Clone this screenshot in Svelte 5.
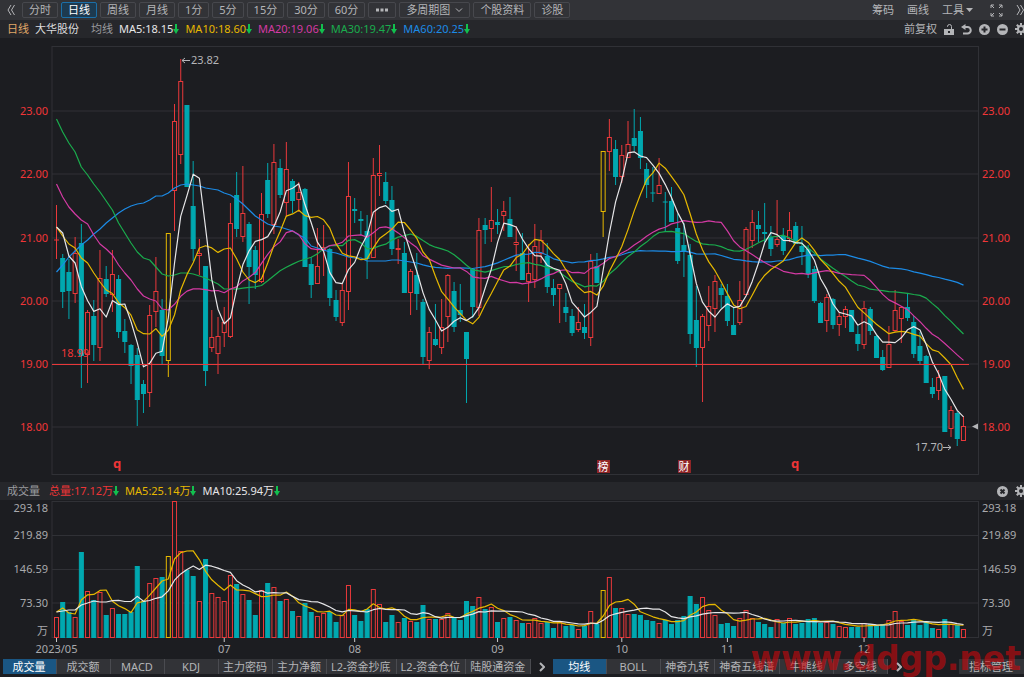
<script lang="ts">
  type Candle = { kind: string; high: number; top: number; bottom: number; low: number };

  const periods = ['分时', '日线', '周线', '月线', '1分', '5分', '15分', '30分', '60分'];

  const averages = [
    { label: 'MA5:18.15', tone: 'white' },
    { label: 'MA10:18.60', tone: 'yellow' },
    { label: 'MA20:19.06', tone: 'pink' },
    { label: 'MA30:19.47', tone: 'green' },
    { label: 'MA60:20.25', tone: 'blue' }
  ];

  const volumeStats = [
    { label: '总量:17.12万', tone: 'red' },
    { label: 'MA5:25.14万', tone: 'yellow' },
    { label: 'MA10:25.94万', tone: 'white' }
  ];

  const volumeTabs = ['成交量', '成交额', 'MACD', 'KDJ', '主力密码', '主力净额', 'L2-资金抄底', 'L2-资金仓位', '陆股通资金'];
  const lineTabs = ['均线', 'BOLL', '神奇九转', '神奇五线谱', '牛熊线', '多空线'];

  // kind (r up, t down, y limit up), then high, body top, body bottom, low in chart units
  const raw = `r 205 240 240 259,t 254 258 292 308,t 259 272 291 319,r 237 253 294 303,t 224 243 356 388,r 310 312 355 383,
t 300 316 345 361,r 250 278 348 361,t 266 279 294 297,r 250 274 295 312,t 275 279 332 338,t 319 331 342 353,
t 344 345 366 384,t 348 355 400 426,t 380 384 394 413,r 305 315 393 407,r 257 291 312 327,t 299 310 356 364,
y 233 233 361 377,r 104 121 191 231,r 59 81 155 164,t 105 105 187 187,t 161 206 249 261,r 239 253 256 275,
t 266 266 371 386,r 310 337 348 352,r 317 336 354 374,r 307 322 333 347,r 203 223 337 338,t 172 195 229 237,
r 166 213 237 242,t 222 224 267 304,t 246 250 275 289,r 193 214 282 283,t 163 180 214 218,r 144 162 225 234,
t 159 168 195 198,r 142 169 203 217,t 179 181 201 213,r 182 192 200 212,t 188 189 267 267,t 257 264 285 298,
r 228 266 284 284,r 225 247 250 276,t 248 249 298 306,t 290 300 317 321,r 284 290 323 326,r 162 196 292 310,
t 198 209 211 223,t 211 219 220 235,t 215 231 259 279,r 158 175 258 258,r 145 173 176 196,t 172 182 201 204,
t 186 200 249 255,r 239 248 250 264,t 242 253 293 293,r 269 271 293 315,t 253 275 294 310,t 299 302 357 365,
r 327 332 361 369,t 304 339 345 346,r 299 327 348 354,r 274 275 317 342,t 282 291 327 332,t 284 310 315 322,
t 332 332 359 403,t 269 269 307 318,r 218 230 308 316,t 218 225 230 244,r 187 220 229 242,t 209 222 225 234,
r 201 211 216 231,t 197 219 237 237,r 226 242 245 271,t 233 253 280 280,r 244 273 282 302,r 224 246 280 288,
r 230 240 254 263,t 243 256 287 293,t 279 288 295 306,r 284 284 289 323,t 293 307 313 322,t 309 316 333 336,
r 307 322 330 332,t 304 327 333 339,r 254 261 338 346,t 253 266 283 283,y 151 151 212 237,r 119 137 152 171,
t 140 149 177 185,r 145 155 177 183,r 121 144 158 158,t 109 138 146 151,t 117 131 158 169,t 163 169 185 198,
t 167 193 193 202,r 158 185 194 194,t 192 202 202 232,t 187 201 222 222,t 214 228 261 264,t 223 245 252 277,
t 244 255 334 344,t 286 320 348 367,r 314 316 348 402,r 286 306 326 341,r 275 281 309 332,t 284 288 295 308,
t 284 296 321 326,t 308 325 335 335,r 281 300 323 325,r 227 229 295 295,r 210 222 241 248,t 211 225 229 242,
t 203 232 234 242,t 226 237 249 256,r 200 239 245 247,t 228 236 251 255,r 212 230 239 242,t 222 226 244 244,
t 226 246 252 265,t 245 249 274 278,t 266 269 301 303,t 302 303 323 323,r 294 297 321 332,t 298 299 325 329,
r 313 316 325 336,r 306 309 317 328,t 310 310 332 332,t 326 334 344 351,r 301 308 345 349,t 307 309 331 335,
t 335 336 358 358,t 350 357 370 371,r 326 344 368 368,r 290 310 331 332,r 306 307 319 343,t 294 307 318 321,
t 316 322 354 358,t 332 346 361 364,t 355 356 383 383,t 378 387 394 398,r 370 377 391 400,t 376 376 432 432,
r 406 410 429 437,t 411 413 439 446,r 416 426 441 441`;

  const candles: Candle[] = raw.split(',').map((row) => {
    const [kind, ...n] = row.trim().split(' ');
    const [high, top, bottom, low] = n.map(Number);
    return { kind, high, top, bottom, low };
  });

  const volumes = [
    20, 35, 25, 20, 85, 46, 37, 45, 22, 29, 23, 23, 25, 71, 36, 54, 59, 60, 81, 136, 86, 67, 61, 36, 78, 44, 40, 36, 62, 53,
    43, 37, 22, 47, 54, 50, 36, 38, 26, 21, 34, 25, 21, 24, 25, 15, 22, 52, 22, 16, 28, 48, 33, 15, 22, 15, 19, 16, 15, 32,
    18, 18, 18, 24, 20, 17, 36, 31, 40, 28, 30, 15, 19, 20, 17, 14, 14, 19, 14, 15, 9, 15, 11, 12, 8, 11, 26, 13, 47, 60,
    29, 29, 23, 23, 22, 17, 16, 14, 17, 13, 17, 21, 41, 33, 40, 27, 22, 13, 14, 11, 19, 27, 19, 15, 13, 10, 18, 14, 19, 13,
    14, 18, 19, 14, 15, 13, 11, 10, 10, 10, 14, 13, 11, 13, 17, 26, 16, 12, 17, 12, 16, 9, 8, 18, 13, 12, 8
  ];

  const STEP = 6.212;
  const BASE = 637;
  const cx = (i: number) => 56.5 + i * STEP;

  // seed holds the values that depend on days before the visible range
  function movingAverage(values: number[], days: number, seed: number[]) {
    return values.map((_, i) =>
      i < days - 1 ? seed[i] : values.slice(i - days + 1, i + 1).reduce((a, b) => a + b, 0) / days
    );
  }

  const toPoints = (ys: number[]) => ys.map((y, i) => `${cx(i).toFixed(1)},${y.toFixed(1)}`).join(' ');

  const closes = candles.map((c) => (c.kind === 't' ? c.bottom : c.top));

  const priceLines = [
    {
      tone: 'blue',
      points: toPoints(movingAverage(closes, 60, [
        272, 265, 257, 251, 245, 240, 234, 229, 223, 218, 213, 209, 206, 204, 203, 200, 196, 196, 193, 188,
        185, 184, 185, 186, 188, 189, 190, 193, 195, 199, 204, 210, 216, 220, 224, 226, 227, 229, 231, 235,
        238, 246, 248, 250, 252, 253, 255, 257, 258, 258, 261, 261, 261, 261, 260, 260, 261, 262, 263
      ]))
    },
    {
      tone: 'green',
      points: toPoints(movingAverage(closes, 30, [
        119, 132, 143, 152, 167, 175, 184, 192, 201, 210, 223, 233, 243, 252, 258, 260, 267, 274, 276, 275,
        273, 273, 274, 276, 278, 281, 284, 289, 289
      ]))
    },
    {
      tone: 'pink',
      points: toPoints(movingAverage(closes, 20, [
        184, 197, 207, 214, 220, 224, 235, 244, 249, 255, 265, 273, 280, 289, 296, 299, 301, 309, 310
      ]))
    },
    { tone: 'yellow', points: toPoints(movingAverage(closes, 10, [227, 236, 244, 248, 258, 263, 273, 282, 290])) },
    { tone: 'white', points: toPoints(movingAverage(closes, 5, [227, 233, 256, 263])) }
  ];

  const fromBase = (hs: number[]) => toPoints(hs.map((h) => BASE - h));
  const volumeLines = [
    { tone: 'yellow', points: fromBase(movingAverage(volumes, 5, [25, 29, 24, 23])) },
    { tone: 'white', points: fromBase(movingAverage(volumes, 10, [25, 26, 27, 27, 32, 34, 36, 35, 35])) }
  ];

  const priceTicks = [
    { y: 111, label: '23.00' },
    { y: 174, label: '22.00' },
    { y: 238, label: '21.00' },
    { y: 301, label: '20.00' },
    { y: 364, label: '19.00' },
    { y: 427, label: '18.00' }
  ];

  const volumeTicks = [
    { y: 508, label: '293.18' },
    { y: 535, label: '219.89' },
    { y: 569, label: '146.59' },
    { y: 603, label: '73.30' },
    { y: 631, label: '万' }
  ];

  const months = [
    { i: 0, label: '2023/05' },
    { i: 27, label: '07' },
    { i: 48, label: '08' },
    { i: 71, label: '09' },
    { i: 91, label: '10' },
    { i: 108, label: '11' },
    { i: 130, label: '12' }
  ];

  let period = $state('日线');
  let volumeTab = $state('成交量');
  let lineTab = $state('均线');
</script>

{#snippet downArrow()}
  <svg class="down" width="6" height="10" viewBox="0 0 6 10" aria-hidden="true"><path d="M2 0h2v5h2L3 10 0 5h2z" /></svg>
{/snippet}

{#snippet gear()}
  <svg width="9" height="12" viewBox="0 0 9 12" aria-hidden="true">
    <circle class="bold" cx="6" cy="6" r="3" />
    <path class="bold" d="M6 0v3M6 9v3M0 6h3M9 6h3M1.8 1.8l2 2M1.8 10.2l2-2M10.2 1.8l-2 2M10.2 10.2l-2-2" />
  </svg>
{/snippet}

<div class="app">
  <header class="toolbar">
    <button class="icon" aria-label="收起">
      <svg width="8" height="12" viewBox="0 0 8 12"><path d="M4 1 1 6l3 5M7.5 1l-3 5 3 5" /></svg>
    </button>
    <nav class="toolbar__periods">
      {#each periods as p}
        <button class="chip" class:chip--on={period === p} onclick={() => (period = p)}>{p}</button>
      {/each}
      <button class="chip" aria-label="更多周期">
        <svg width="14" height="4" viewBox="0 0 14 4"><path class="solid" d="M1 .5h3v3H1zM5.5 .5h3v3h-3zM10 .5h3v3h-3z" /></svg>
      </button>
      <button class="chip">
        多周期图
        <svg width="8" height="5" viewBox="0 0 8 5"><path d="m1 .5 3 3 3-3" /></svg>
      </button>
      <button class="chip">个股资料</button>
      <button class="chip">诊股</button>
    </nav>
    <div class="toolbar__tools">
      <button class="plain">筹码</button>
      <button class="plain">画线</button>
      <button class="plain">工具<svg width="7" height="4" viewBox="0 0 7 4"><path class="solid" d="M0 0h7L3.5 4z" /></svg></button>
      <button class="icon icon--full" aria-label="全屏">
        <svg width="13" height="13" viewBox="0 0 13 13"><path d="M1 4V1h3M1 1l3 3M9 1h3v3M12 1 9 4M1 9v3h3M1 12l3-3M12 9v3H9M12 12 9 9" /></svg>
      </button>
      <button class="icon" aria-label="展开">
        <svg width="8" height="12" viewBox="0 0 8 12"><path d="m1 1 3 5-3 5M4.500 1l3 5-3 5" /></svg>
      </button>
    </div>
  </header>

  <section class="info">
    <span class="orange">日线</span>
    <span class="info__name">大华股份</span>
    <span class="info__key">均线</span>
    {#each averages as a}
      <span class="stat {a.tone}">{a.label}{@render downArrow()}</span>
    {/each}
    <div class="info__tools">
      <button class="plain">前复权</button>
      <button class="icon" aria-label="锁定">
        <svg width="10" height="11" viewBox="0 0 10 11"><path d="M3.5 3V2.500a2 2 0 0 1 4 0V5" /><path class="solid" fill-rule="evenodd" d="M0 5h10v6H0zM4 7v2h2V7z" /></svg>
      </button>
      <button class="icon" aria-label="撤销">
        <svg width="11" height="11" viewBox="0 0 11 11"><path class="bold" d="M3 3h3.5a3 3 0 0 1 0 6.500H2" /><path class="solid" d="M4.500 0v6L0 3z" /></svg>
      </button>
      <button class="icon" aria-label="放大">
        <svg width="11" height="11" viewBox="0 0 11 11"><circle class="solid" cx="5.5" cy="5.5" r="5.5" /><path class="cut" d="M5.5 2.500v6M2.500 5.500h6" /></svg>
      </button>
      <button class="icon" aria-label="缩小">
        <svg width="11" height="11" viewBox="0 0 11 11"><circle class="solid" cx="5.5" cy="5.5" r="5.5" /><path class="cut" d="M2.500 5.500h6" /></svg>
      </button>
      <button class="icon" aria-label="设置">{@render gear()}</button>
    </div>
  </section>

  <svg class="chart" viewBox="0 38 1024 444" role="img" aria-label="大华股份 日线">
    <g class="grid">
      <rect x="52" y="46.5" width="926.5" height="428" />
      {#each priceTicks as t}
        <path d="M52 {t.y}H978" />
      {/each}
    </g>
    {#each priceTicks as t}
      <text class="axis axis--red" x="48" y={t.y + 4} text-anchor="end">{t.label}</text>
      <text class="axis axis--red" x="982" y={t.y + 4}>{t.label}</text>
    {/each}

    {#each candles as c, i}
      <g class="candle candle--{c.kind}">
        <path d="M{cx(i)} {c.high}V{c.top}M{cx(i)} {c.bottom}V{c.low}" />
        {#if c.bottom - c.top < 1}
          <path d="M{cx(i) - 2.5} {c.top}h5" />
        {:else}
          <rect x={cx(i) - 2} y={c.top + 0.5} width="4" height={Math.max(c.bottom - c.top - 1, 1)} />
        {/if}
      </g>
    {/each}

    {#each priceLines as l}
      <polyline class="line {l.tone}" points={l.points} />
    {/each}
    <path class="level" d="M52 364.5H969" />
    <text class="axis axis--red" x="61" y="357">18.99</text>

    <g class="note">
      <path d="M190 60.5h-8m3-2.500-3 2.500 3 2.500" />
      <text x="191" y="64">23.82</text>
      <path d="M943 447.5h8m-3-2.500 3 2.500-3 2.500" />
      <text x="915" y="451">17.70</text>
      <path class="note__mark" d="M972 426.5l6-3v6z" />
    </g>

    <text class="event" x="117" y="468">q</text>
    <text class="event" x="795" y="468">q</text>
    <g class="badge">
      <rect x="597" y="460" width="13" height="13" />
      <text x="603" y="471">榜</text>
      <rect x="678" y="460" width="13" height="13" />
      <text x="684" y="471">财</text>
    </g>
  </svg>

  <section class="info info--volume">
    <span class="info__key">成交量</span>
    {#each volumeStats as s}
      <span class="stat {s.tone}">{s.label}{@render downArrow()}</span>
    {/each}
    <div class="info__tools">
      <button class="icon" aria-label="关闭">
        <svg width="11" height="11" viewBox="0 0 11 11"><circle class="solid" cx="5.5" cy="5.5" r="5.5" /><path class="cut" d="m3.5 3.5 4 4M7.5 3.5l-4 4" /></svg>
      </button>
      <button class="icon" aria-label="设置">{@render gear()}</button>
    </div>
  </section>

  <svg class="chart" viewBox="0 500 1024 156" role="img" aria-label="成交量">
    <g class="grid">
      <rect x="52" y="501.5" width="926.5" height="136" />
      <path d="M52 535.5H978M52 569.5H978M52 603H978" />
    </g>
    {#each volumeTicks as t}
      <text class="axis" x="48" y={t.y + 4} text-anchor="end">{t.label}</text>
      <text class="axis" x="982" y={t.y + 4}>{t.label}</text>
    {/each}
    {#each volumes as v, i}
      <g class="candle candle--{candles[i].kind}">
        <rect x={cx(i) - 2} y={BASE - v + 0.5} width="4" height={v} />
      </g>
    {/each}
    {#each volumeLines as l}
      <polyline class="line {l.tone}" points={l.points} />
    {/each}
    {#each months as m}
      <path class="tick" d="M{cx(m.i)} 638v4" />
      <text class="axis" x={cx(m.i)} y="653" text-anchor="middle">{m.label}</text>
    {/each}
  </svg>

  <footer class="tabs">
    <div class="tabs__group">
      {#each volumeTabs as t}
        <button class="tab" class:tab--on={volumeTab === t} onclick={() => (volumeTab = t)}>{t}</button>
      {/each}
    </div>
    <button class="icon icon--next" aria-label="更多指标">
      <svg width="6" height="10" viewBox="0 0 6 10"><path class="bold" d="m1 1 4 4-4 4" /></svg>
    </button>
    <div class="tabs__group">
      {#each lineTabs as t}
        <button class="tab" class:tab--on={lineTab === t} onclick={() => (lineTab = t)}>{t}</button>
      {/each}
    </div>
    <button class="icon icon--next" aria-label="更多均线">
      <svg width="6" height="10" viewBox="0 0 6 10"><path class="bold" d="m1 1 4 4-4 4" /></svg>
    </button>
    <button class="tab tab--manage">指标管理</button>
  </footer>

  <div class="watermark">www.ddgp.net</div>
</div>

<style>
  :global(body) { background: #17181b; }
  .app { position: relative; overflow: hidden; background: #1c1d21; color: #b4b5b8; font: 11px/16px "Noto Sans", "Noto Sans CJK SC", sans-serif; white-space: nowrap; }
  button { display: flex; align-items: center; justify-content: center; margin: 0; padding: 0; border: 0; background: none; color: inherit; font: inherit; cursor: pointer; }
  button svg { flex: none; fill: none; stroke: currentColor; stroke-width: 1; }
  .solid { fill: currentColor; stroke: none; }
  .bold { stroke-width: 2; }
  .cut { stroke: #26272b; stroke-width: 2; }

  .toolbar { display: flex; align-items: center; height: 20px; padding-left: 7px; background: #323337; }
  .toolbar__periods { display: flex; gap: 3px; margin-left: 7px; }
  .toolbar__tools { display: flex; align-items: center; gap: 13px; margin-left: auto; }
  .chip { box-sizing: border-box; height: 16px; padding: 0 6px; gap: 5px; border: 1px solid #47484d; border-radius: 2px; line-height: 14px; }
  .chip--on { background: #1d3a50; border-color: #1b6fa8; color: #fff; }
  .plain { gap: 2px; }
  .icon--full { margin-left: 4px; }

  .info { display: flex; align-items: center; gap: 6px; height: 18px; padding-left: 7px; background: #26272b; }
  .info__name { color: #dcdcde; }
  .info__key { color: #9a9b9f; }
  .info__name + .info__key { margin-left: 6px; }
  .info--volume .info__key { margin-right: 3px; }
  .info__tools { display: flex; align-items: center; gap: 7px; margin-left: auto; }
  .stat { display: flex; align-items: center; color: var(--tone); }
  .down { fill: #12c04e; }

  .white { --tone: #e6e6e8; }
  .yellow { --tone: #e6b800; }
  .pink { --tone: #d43aa4; }
  .green { --tone: #1aac4d; }
  .blue { --tone: #1c8be6; }
  .red { --tone: #ee3537; }
  .orange { color: #e0a868; }

  .chart { display: block; width: 100%; height: auto; }
  .grid { fill: none; stroke: #303136; }
  .axis { fill: #a9aaad; }
  .axis--red { fill: #f03638; }
  .line { fill: none; stroke: var(--tone); stroke-width: 1.2; stroke-linejoin: round; }
  .level { stroke: #e8383a; }
  .tick { stroke: #c8c8ca; }
  .candle { stroke-width: 1; }
  .candle--r { stroke: #ea393b; fill: #1c1d21; }
  .candle--t { stroke: #00a8b0; fill: #00a8b0; }
  .candle--y { stroke: #e6b800; fill: #1c1d21; }
  .note { fill: #b4b5b8; }
  .note path { fill: none; stroke: #b4b5b8; }
  .note .note__mark { fill: #b4b5b8; stroke: none; }
  .event { fill: #ee3537; font-size: 13px; font-weight: 700; text-anchor: middle; }
  .badge rect { fill: #8f2527; }
  .badge text { fill: #fff; text-anchor: middle; }

  .tabs { display: flex; align-items: center; height: 15px; padding: 3px 0 3px 3px; }
  .tabs__group { display: flex; }
  .tab { box-sizing: border-box; min-width: 54px; height: 15px; padding: 0 5px 0 4px; border-right: 1px solid #4a4b50; background: #323337; }
  .tab--on { background: #1a5683; color: #fff; }
  .tab--manage { min-width: 65px; margin-left: auto; border-right: 0; }
  .icon--next { width: 22px; }

  .watermark { position: absolute; right: 3px; bottom: 0; color: rgba(205, 8, 12, 0.62); font: 700 33px/36px "DejaVu Sans", sans-serif; pointer-events: none; }
</style>
